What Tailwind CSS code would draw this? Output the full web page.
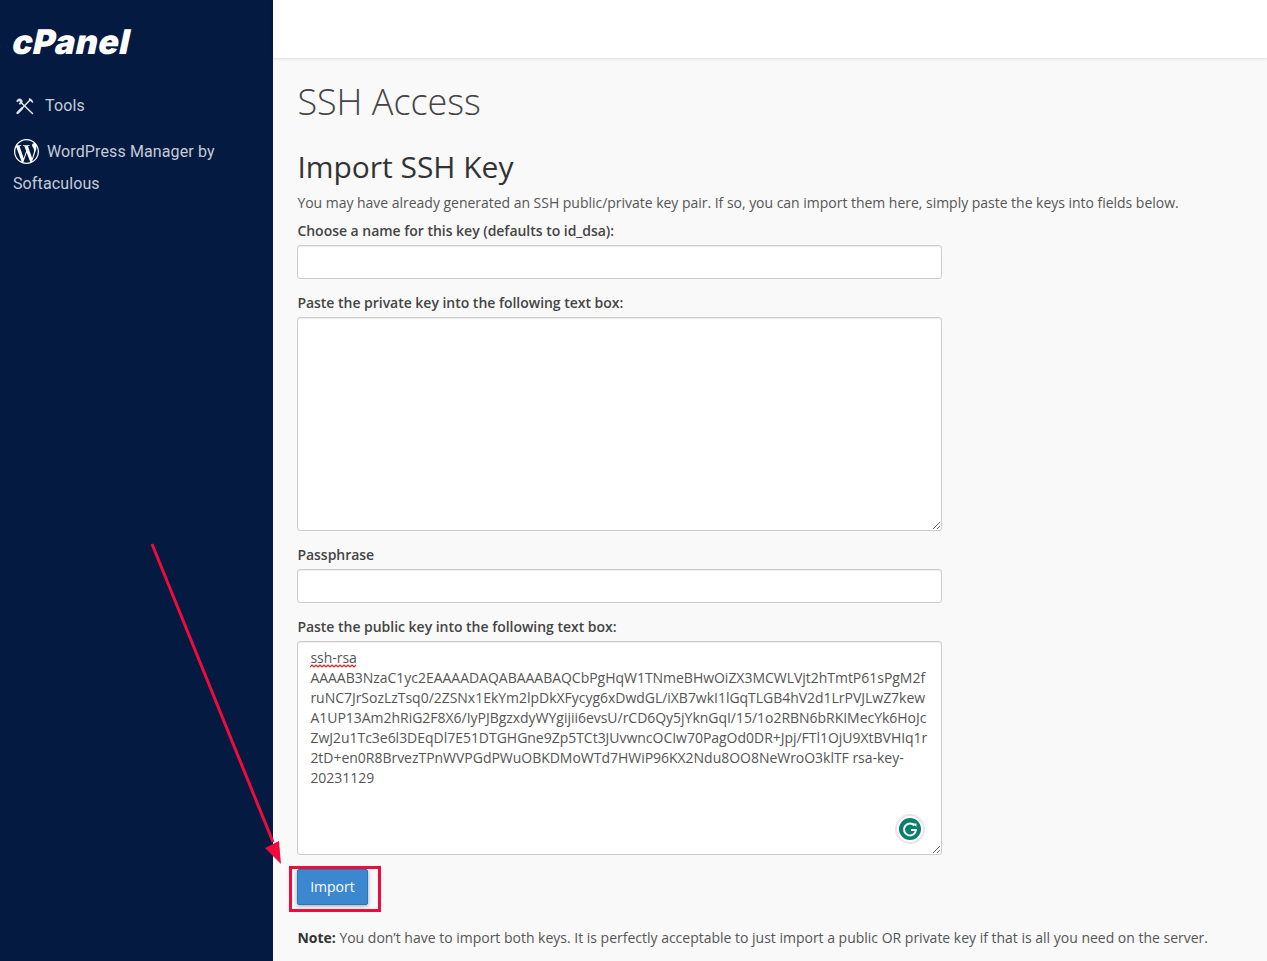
<!DOCTYPE html>
<html lang="en">
<head>
    <meta charset="UTF-8">
    <meta name="viewport" content="width=device-width, initial-scale=1.0">
    <title>SSH Access</title>
    <script src="https://cdn.jsdelivr.net/npm/@tailwindcss/browser@4"></script>
</head>
<body class="relative flex h-[961px] overflow-hidden bg-[#f9f9f9] font-['Open_Sans',sans-serif] text-sm tracking-[-0.025px] text-[#555]">

    <!-- sidebar -->
    <aside class="h-full w-[273px] shrink-0 bg-[#051a40] pl-[13px] font-['Roboto',sans-serif] tracking-[0.12px] text-[#c3ccd9]">
        <div class="mt-[24px] h-[36px] w-[118px] origin-left -skew-x-12 font-['Inter',sans-serif] text-[34px] leading-[36px] font-black tracking-[0.4px] text-white">cPanel</div>
        <a href="#" class="mt-[34px] flex h-[24px] items-center gap-[10px] pl-[2px] text-base">
            <svg class="h-[20px] w-[20px]" viewBox="0 0 20 20" fill="none" stroke="#e5e9ef" stroke-width="1.5" stroke-linecap="round">
                <path d="M15.5 3.5 L3 16.5" stroke-width="1.4"/>
                <path d="M2.5 17 L7 12.3" stroke-width="2.4"/>
                <path d="M15.5 3.5 L17 5 M14.5 3 L17.5 6"/>
                <path d="M6.5 7 L17.5 17.5"/>
                <path d="M5.5 3 C3 2.5 1.5 4 2 6 L4 4.6 L5.6 6 L4 8 C6 8.5 7.8 6.8 7 4.5 Z" fill="#e5e9ef" stroke-width="0.8"/>
            </svg>
            Tools
        </a>
        <a href="#" class="mt-[18px] block w-[240px] text-base leading-[32px]">
            <svg class="mr-[8px] ml-[1px] inline-block h-[25px] w-[25px] align-[-7px]" viewBox="0 0 24 24" fill="#fff">
                <path d="M21.469 6.825c.84 1.537 1.318 3.3 1.318 5.175 0 3.979-2.156 7.456-5.363 9.325l3.295-9.527c.615-1.54.82-2.771.82-3.864 0-.405-.026-.78-.07-1.11m-7.981.105c.647-.03 1.232-.105 1.232-.105.582-.075.514-.93-.067-.899 0 0-1.755.135-2.88.135-1.064 0-2.85-.15-2.85-.15-.585-.03-.661.855-.075.885 0 0 .54.061 1.125.09l1.68 4.605-2.37 7.08L5.354 6.9c.649-.03 1.234-.1 1.234-.1.585-.075.516-.93-.065-.896 0 0-1.746.138-2.874.138-.2 0-.438-.008-.69-.015C4.911 3.15 8.235 1.215 12 1.215c2.809 0 5.365 1.072 7.286 2.833-.046-.003-.091-.009-.141-.009-1.06 0-1.812.923-1.812 1.914 0 .89.513 1.643 1.06 2.531.411.72.89 1.643.89 2.977 0 .915-.354 1.994-.821 3.479l-1.075 3.585-3.9-11.61.001.014zM12 22.784c-1.059 0-2.081-.153-3.048-.437l3.237-9.406 3.315 9.087c.024.053.05.101.078.149-1.12.393-2.325.609-3.582.609M1.211 12c0-1.564.336-3.05.935-4.39L7.29 21.709C3.694 19.96 1.212 16.271 1.211 12M12 0C5.385 0 0 5.385 0 12s5.385 12 12 12 12-5.385 12-12S18.615 0 12 0"/>
            </svg>WordPress Manager by Softaculous
        </a>
    </aside>

    <div class="min-w-0 flex-1">
        <header class="h-[58px] bg-white shadow-[0_1px_3px_rgba(0,0,0,0.12)]"></header>

        <main class="pt-[24px] pl-[24.4px]">
            <h1 class="text-[36px] leading-[40px] font-light text-[#444]">SSH Access</h1>
            <h2 class="mt-[28px] text-[30px] leading-[33px] font-normal text-[#333]">Import SSH Key</h2>
            <p class="mt-[10px] leading-[20px]">You may have already generated an SSH public/private key pair. If so, you can import them here, simply paste the keys into fields below.</p>

            <form class="mt-[8px] w-[645px]">
                <label class="mb-[4px] block leading-[20px] font-semibold text-[#444]">Choose a name for this key (defaults to id_dsa):</label>
                <input type="text" class="block h-[34px] w-full rounded-[3px] border border-[#ccc] bg-white shadow-[inset_0_1px_1px_rgba(0,0,0,0.075)]">

                <label class="mt-[14px] mb-[4px] block leading-[20px] font-semibold text-[#444]">Paste the private key into the following text box:</label>
                <textarea class="block h-[214px] w-full rounded-[3px] border border-[#ccc] bg-white shadow-[inset_0_1px_1px_rgba(0,0,0,0.075)]"></textarea>

                <label class="mt-[14px] mb-[4px] block leading-[20px] font-semibold text-[#444]">Passphrase</label>
                <input type="password" class="block h-[34px] w-full rounded-[3px] border border-[#ccc] bg-white shadow-[inset_0_1px_1px_rgba(0,0,0,0.075)]">

                <label class="mt-[14px] mb-[4px] block leading-[20px] font-semibold text-[#444]">Paste the public key into the following text box:</label>
                <div class="relative">
                    <textarea spellcheck="false" class="block h-[214px] w-full rounded-[3px] border border-[#ccc] bg-white px-[12px] py-[6px] leading-[20px] text-[#555] shadow-[inset_0_1px_1px_rgba(0,0,0,0.075)]">ssh-rsa
AAAAB3NzaC1yc2EAAAADAQABAAABAQCbPgHqW1TNmeBHwOiZX3MCWLVjt2hTmtP61sPgM2f
ruNC7JrSozLzTsq0/2ZSNx1EkYm2lpDkXFycyg6xDwdGL/iXB7wkI1lGqTLGB4hV2d1LrPVJLwZ7kew
A1UP13Am2hRiG2F8X6/IyPJBgzxdyWYgijii6evsU/rCD6Qy5jYknGqI/15/1o2RBN6bRKIMecYk6HoJc
ZwJ2u1Tc3e6l3DEqDl7E51DTGHGne9Zp5TCt3JUvwncOCIw70PagOd0DR+Jpj/FTl1OjU9XtBVHIq1r
2tD+en0R8BrvezTPnWVPGdPWuOBKDMoWTd7HWiP96KX2Ndu8OO8NeWroO3klTF rsa-key-
20231129</textarea>
                    <!-- spellcheck squiggle -->
                    <svg class="absolute top-[23px] left-[13px] h-[4px] w-[47px]" viewBox="0 0 47 4" fill="none" stroke="#e0201c" stroke-width="1.2">
                        <path d="M0 3 L2 1 L4 3 L6 1 L8 3 L10 1 L12 3 L14 1 L16 3 L18 1 L20 3 L22 1 L24 3 L26 1 L28 3 L30 1 L32 3 L34 1 L36 3 L38 1 L40 3 L42 1 L44 3 L46 1"/>
                    </svg>
                    <!-- grammarly badge -->
                    <div class="absolute top-[173px] right-[17px] flex h-[30px] w-[30px] items-center justify-center rounded-full border-2 border-[#e6e6e6] bg-white">
                        <svg class="h-[22px] w-[22px]" viewBox="0 0 22 22">
                            <circle cx="11" cy="11" r="11" fill="#0a7f6d"/>
                            <path d="M15.5 7.5 A6 6 0 1 0 17 12 L12 12" fill="none" stroke="#fff" stroke-width="2"/>
                            <path d="M14.2 5.5 L17.5 5.6 L17.4 9 Z" fill="#fff"/>
                        </svg>
                    </div>
                </div>

                <button type="button" class="mt-[14px] block h-[36px] w-[71px] rounded-[2px] border border-[#2f75b5] bg-[#3b88d0] pr-[1px] text-center text-sm text-white shadow-[0_1px_4px_rgba(0,0,0,0.35)]">Import</button>
            </form>

            <p class="mt-[23px] w-[960px] leading-[20px] tracking-[-0.008px]"><strong class="font-bold text-[#333]">Note:</strong> You don’t have to import both keys. It is perfectly acceptable to just import a public OR private key if that is all you need on the server.</p>
        </main>
    </div>

    <!-- annotation drawn over the screenshot -->
    <svg class="absolute top-0 left-0 h-[961px] w-[1267px]" viewBox="0 0 1267 961" fill="none">
        <path d="M152 544 L273 842" stroke="#ee0c3c" stroke-width="3"/>
        <path d="M281 864 L265 848 L279 841 Z" fill="#ee0c3c"/>
    </svg>
    <div class="absolute top-[866px] left-[289px] h-[46px] w-[92px] border-[3px] border-[#ee0c3c]"></div>

</body>
</html>
